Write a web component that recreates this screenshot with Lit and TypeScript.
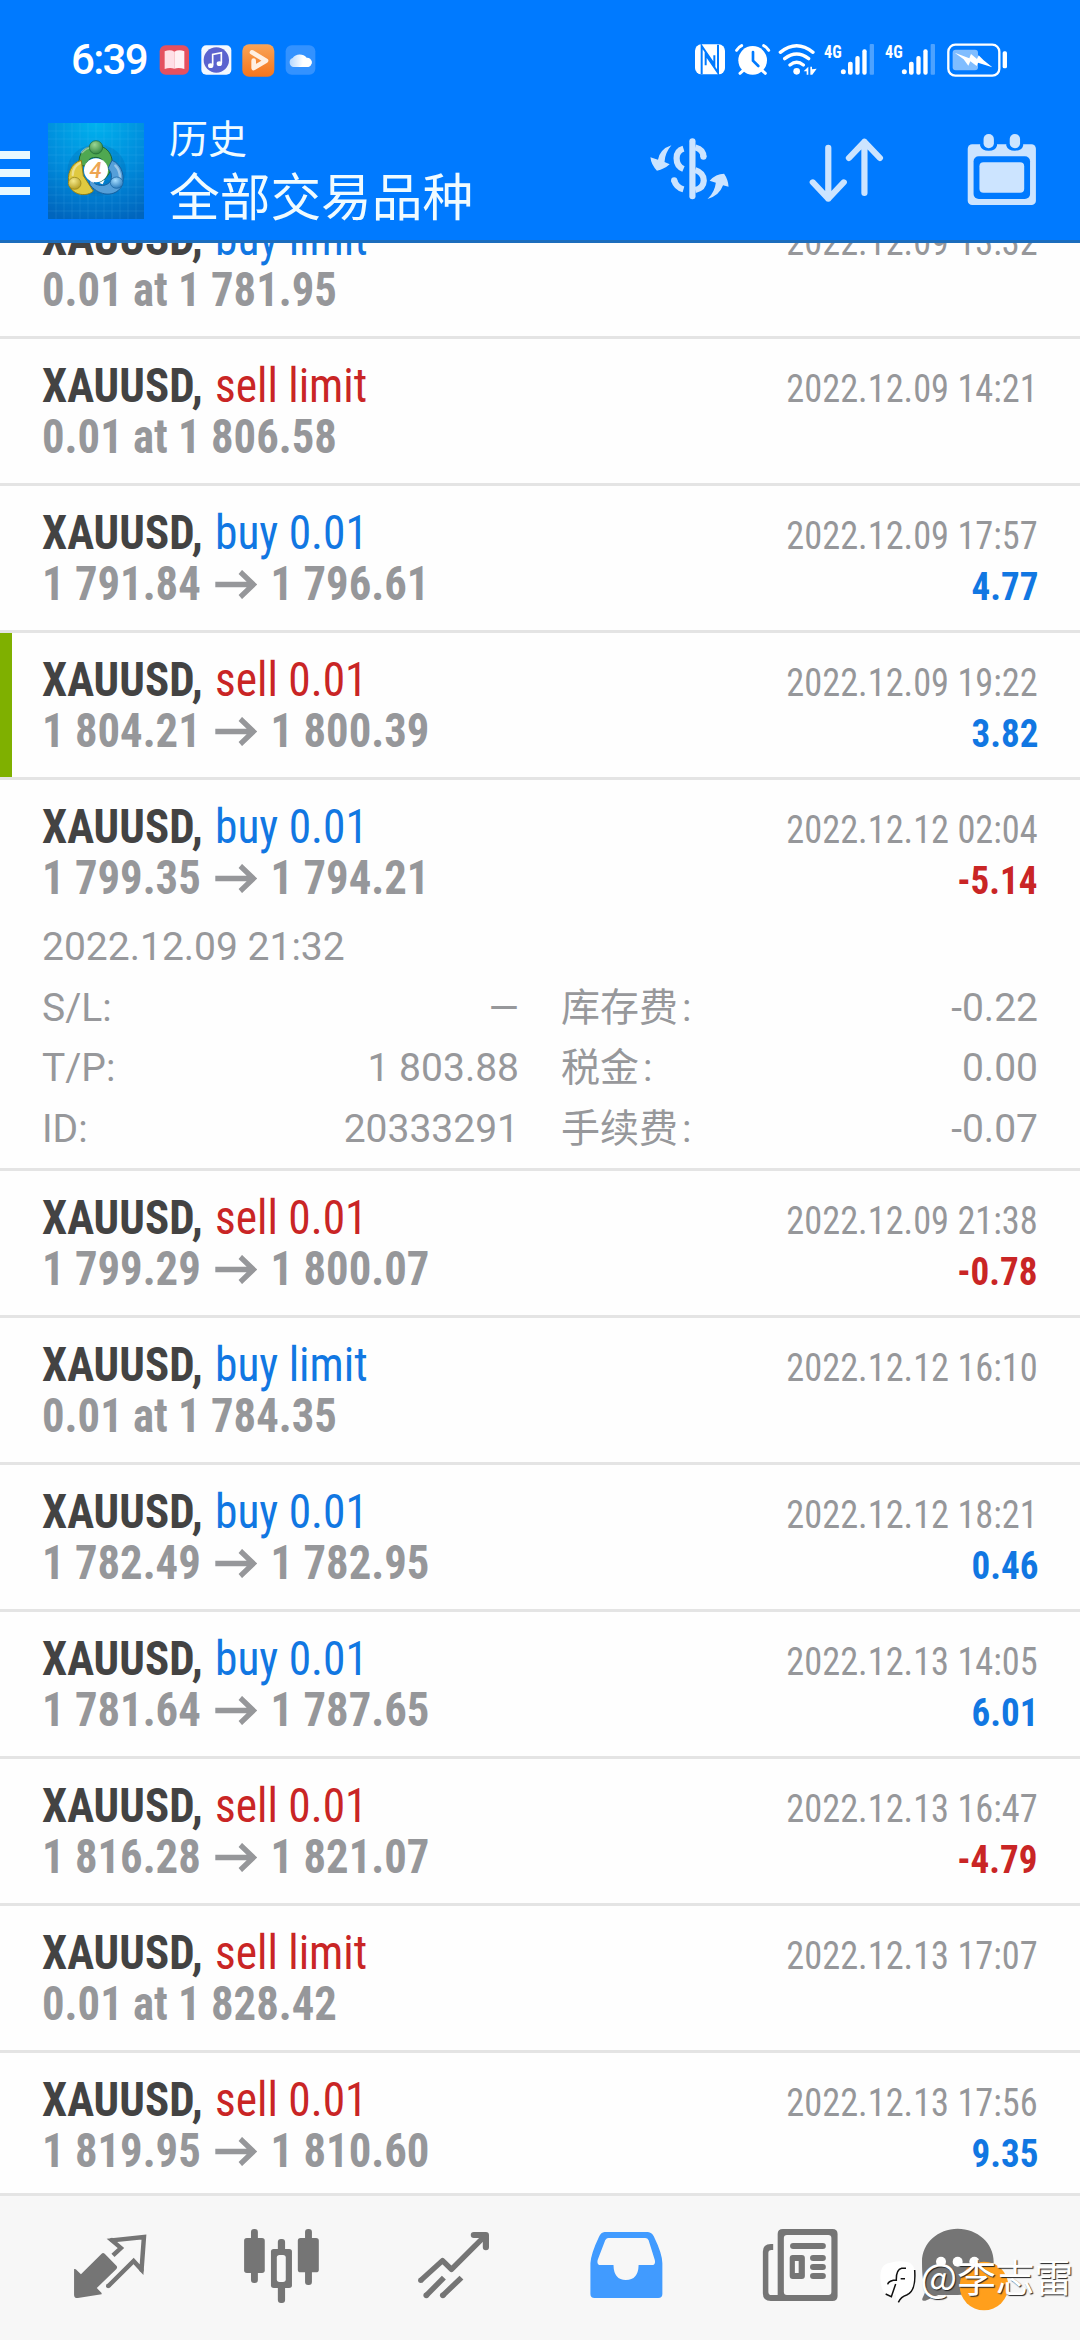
import { LitElement, html, css, svg, nothing } from "lit";
import { customElement, property } from "lit/decorators.js";

interface Deal {
  side: "buy" | "sell";
  kind: string;
  from?: string;
  to: string;
  time: string;
  profit?: string;
  marked?: boolean;
  open?: boolean;
}

const DEALS: Deal[] = [
  { side: "buy", kind: "limit", to: "0.01 at 1 781.95", time: "2022.12.09 13:32" },
  { side: "sell", kind: "limit", to: "0.01 at 1 806.58", time: "2022.12.09 14:21" },
  { side: "buy", kind: "0.01", from: "1 791.84", to: "1 796.61", time: "2022.12.09 17:57", profit: "4.77" },
  { side: "sell", kind: "0.01", from: "1 804.21", to: "1 800.39", time: "2022.12.09 19:22", profit: "3.82", marked: true },
  { side: "buy", kind: "0.01", from: "1 799.35", to: "1 794.21", time: "2022.12.12 02:04", profit: "-5.14", open: true },
  { side: "sell", kind: "0.01", from: "1 799.29", to: "1 800.07", time: "2022.12.09 21:38", profit: "-0.78" },
  { side: "buy", kind: "limit", to: "0.01 at 1 784.35", time: "2022.12.12 16:10" },
  { side: "buy", kind: "0.01", from: "1 782.49", to: "1 782.95", time: "2022.12.12 18:21", profit: "0.46" },
  { side: "buy", kind: "0.01", from: "1 781.64", to: "1 787.65", time: "2022.12.13 14:05", profit: "6.01" },
  { side: "sell", kind: "0.01", from: "1 816.28", to: "1 821.07", time: "2022.12.13 16:47", profit: "-4.79" },
  { side: "sell", kind: "limit", to: "0.01 at 1 828.42", time: "2022.12.13 17:07" },
  { side: "sell", kind: "0.01", from: "1 819.95", to: "1 810.60", time: "2022.12.13 17:56", profit: "9.35" },
];

const SX = 2.904;

// Icons are drawn on a grid about three times finer than the screen.
const icon = (x: number, y: number, w: number, h: number, body: unknown, sx = 3) => html`<svg
  width=${w / sx} height=${h / 3} viewBox="${x} ${y} ${w} ${h}" preserveAspectRatio="none">${body}</svg>`;

const signal = (dx: number) => svg`<g transform="translate(${dx} 0)">
  <text x="433" y="67" font-size="56" font-weight="700" font-family="Roboto Condensed" textLength="53" lengthAdjust="spacingAndGlyphs" fill="#fff">4G</text>
  <circle cx="491" cy="109" r="7.5"/><rect x="505" y="79" width="14" height="39" rx="6"/>
  <rect x="527" y="62" width="13" height="56" rx="6"/><rect x="548" y="42" width="13" height="76" rx="6"/>
  <rect x="570" y="26" width="13" height="92" rx="3" opacity=".3"/></g>`;

const STATUS_RIGHT = svg`<g fill="#fff">
  <rect x="46" y="27" width="90" height="90" rx="19"/>
  <path d="M66 117V32L104 88V60M115 28V112L78 58V90" fill="none" stroke="#007aff" stroke-width="6"/>
  <circle cx="219" cy="75" r="43"/>
  <path d="M171 45Q177 35 186 31M252 31Q261 35 267 45M190 106L181 114M248 106L257 114" fill="none" stroke="#fff" stroke-width="9" stroke-linecap="round"/>
  <path d="M220 50V76L236 92" fill="none" stroke="#007aff" stroke-width="8" stroke-linecap="round"/>
  <path d="M302 51Q351 12 400 51M315 70Q351 42 387 70M331 89Q351 73 371 89" fill="none" stroke="#fff" stroke-width="10" stroke-linecap="round"/>
  <circle cx="351" cy="108" r="10"/>
  <path d="M372 108L386 94V118H381V108ZM392 94H397V102L411 100L398 118H392Z"/>
  ${signal(0)}${signal(183)}
  <rect x="806" y="28" width="153" height="93" rx="21" fill="none" stroke="#fff" stroke-width="7"/>
  <rect x="819" y="43" width="76" height="62" rx="9" opacity=".5"/>
  <path d="M825 52L869 69L874 56L892 71L897 60L912 75L938 96L895 82L891 92L872 78L866 91L852 72Z"/>
  <rect x="969" y="48" width="13" height="51" rx="5"/></g>`;

const STATUS_APPS = svg`<defs>
  <linearGradient id="or" x1="0" y1="0" x2="0" y2="1"><stop offset="0" stop-color="#f9a457"/><stop offset="1" stop-color="#f5751c"/></linearGradient>
  <linearGradient id="cl" x1="0" y1="0" x2="1" y2="0"><stop offset="0" stop-color="#b5d8ff"/><stop offset=".6" stop-color="#fff"/></linearGradient></defs>
  <rect x="298" y="30" width="88" height="88" rx="18" fill="#e4505f"/>
  <path d="M313 48Q330 41 342 49V100Q328 96 313 101Z" fill="#ffdfe6"/><path d="M342 49Q356 41 372 48V101Q356 96 342 100Z" fill="#fff0f3"/>
  <rect x="423" y="30" width="90" height="88" rx="15" fill="#f4f8ff"/>
  <circle cx="468" cy="74" r="38" fill="#5b63cf"/>
  <path d="M457 90V57L483 52V84" fill="none" stroke="#fff" stroke-width="5"/><ellipse cx="451" cy="91" rx="8" ry="7" fill="#fff"/><ellipse cx="477" cy="85" rx="8" ry="7" fill="#fff"/>
  <rect x="546" y="27" width="96" height="97" rx="20" fill="url(#or)"/>
  <path d="M575 51L617 76L580 98V76" fill="none" stroke="#fff0e2" stroke-width="14" stroke-linejoin="round" stroke-linecap="round"/>
  <rect x="676" y="30" width="89" height="88" rx="18" fill="#3392ff"/>
  <path d="M700 95A14 14 0 0 1 697 68A25 22 0 0 1 739 67A14 14 0 0 1 742 95Z" fill="url(#cl)"/>
  <path d="M714 95Q726 92 732 76Q739 67 747 71A13 13 0 0 1 742 95Z" fill="#fff"/>`;

const LOGO = svg`<defs>
  <radialGradient id="bg" cx=".5" cy="0" r="1.05"><stop offset="0" stop-color="#00b2ee"/><stop offset=".55" stop-color="#008bdb"/><stop offset="1" stop-color="#0065bd"/></radialGradient>
  <radialGradient id="g" cx=".4" cy=".3" r=".8"><stop offset="0" stop-color="#9bd694"/><stop offset="1" stop-color="#257d35"/></radialGradient>
  <radialGradient id="y" cx=".4" cy=".3" r=".8"><stop offset="0" stop-color="#f5e98a"/><stop offset="1" stop-color="#ae9414"/></radialGradient>
  <radialGradient id="b" cx=".4" cy=".3" r=".8"><stop offset="0" stop-color="#a5ddff"/><stop offset="1" stop-color="#1c6fb4"/></radialGradient></defs>
  <rect x="24" y="24" width="288" height="288" fill="url(#bg)"/>
  <path d="M48 24V312M72 24V312M96 24V312M120 24V312M144 24V312M168 24V312M192 24V312M216 24V312M240 24V312M264 24V312M288 24V312M24 48H312M24 72H312M24 96H312M24 120H312M24 144H312M24 168H312M24 192H312M24 216H312M24 240H312M24 264H312M24 288H312" stroke="#6cc8f5" stroke-opacity=".2" stroke-width="2" fill="none"/>
  <ellipse cx="170" cy="166" rx="88" ry="78" fill="#004e8e" opacity=".18"/>
  <path d="M118 150C112 115 135 92 168 92C204 92 224 126 214 160C207 182 190 198 180 200C198 176 205 130 168 127C146 127 140 142 137 154Z" fill="#4fa851" stroke="#1c6434" stroke-width="3"/>
  <path d="M124 136C94 142 78 180 88 212C100 242 142 246 160 228L130 182Z" fill="#dfc940" stroke="#8e7d16" stroke-width="3"/>
  <path d="M216 136C248 148 256 190 244 216C224 246 180 244 152 212C146 204 148 198 152 196C176 222 214 212 214 188C216 172 208 166 204 160Z" fill="#559fd9" stroke="#17609e" stroke-width="3"/>
  <path d="M126 112C138 98 152 96 164 100M98 180C98 164 108 150 120 144M226 152Q240 166 240 188" stroke="#fff" stroke-opacity=".4" stroke-width="7" fill="none" stroke-linecap="round"/>
  <circle cx="168" cy="166" r="36" fill="#fff"/>
  <path d="M148 196L158 199L164 206ZM178 204L194 194L188 208Z" fill="#fff"/>
  <ellipse cx="168" cy="97" rx="20" ry="20" fill="url(#g)" stroke="#1c6434" stroke-width="2"/>
  <ellipse cx="104" cy="205" rx="19" ry="18" fill="url(#y)" stroke="#8e7d16" stroke-width="2"/>
  <ellipse cx="230" cy="203" rx="19" ry="17" fill="url(#b)" stroke="#17609e" stroke-width="2"/>
  <text x="167" y="189" text-anchor="middle" font-size="66" font-family="Roboto" font-style="italic" font-weight="500" fill="#eda552">4</text>`;

const DOLLAR = svg`<g fill="none" stroke="#cce4ff" stroke-width="18">
  <path d="M444 425V590" stroke-linecap="round"/>
  <path d="M418 447Q398 453 398 476Q398 500 418 508"/>
  <path d="M452 443Q476 449 476 472" /><circle cx="476" cy="471" r="9" fill="#cce4ff" stroke="none"/>
  <path d="M452 511Q477 519 477 543Q476 566 452 571"/>
  <path d="M391 542Q397 563 418 569"/><circle cx="391" cy="542" r="9" fill="#cce4ff" stroke="none"/></g>
  <path d="M383 437Q350 448 344 480L322 473Q324 495 341 513Q362 509 378 494L363 487Q364 460 383 437ZM488 598Q522 588 533 557L549 561Q548 540 536 522Q512 522 494 543L512 549Q509 577 488 598Z" fill="#cce4ff"/>`;

const SORT = svg`<path d="M836 444V597M791 548L836 597L881 548M941 580V426M896 475L941 426L986 475" fill="none" stroke="#cce4ff" stroke-width="18" stroke-linecap="round" stroke-linejoin="round"/>`;

const CALENDAR = svg`<rect x="1243" y="434" width="198" height="182" rx="13" fill="#cce4ff"/>
  <rect x="1260" y="470" width="164" height="128" rx="15" fill="#007aff"/>
  <rect x="1277" y="488" width="130" height="91" rx="12" fill="#cce4ff"/>
  <path d="M1279 430H1328V438Q1324 453 1304 453Q1284 453 1279 438ZM1355 430H1404V438Q1400 453 1380 453Q1360 453 1355 438Z" fill="#007aff"/>
  <rect x="1289" y="403" width="30" height="43" rx="15" fill="#cce4ff"/><rect x="1365" y="403" width="30" height="43" rx="15" fill="#cce4ff"/>`;

const QUOTES = svg`<path d="M215 267L220 268L235 283L295 221Q299 217 304 221L338 257Q342 262 338 267L281 324L295 339V343L226 354Q215 355 215 344Z"/>
  <path d="M328 226L351 204L325 181L418 171L411 269L388 243L314 319" fill="none" stroke="#757575" stroke-width="13"/><circle cx="325" cy="180" r="6.5"/><circle cx="411" cy="270" r="6.5"/><circle cx="314" cy="318" r="6.5"/>`;
const CHART = svg`<rect x="729" y="147" width="20" height="162" rx="9"/><rect x="709" y="174" width="60" height="105" rx="8"/>
  <rect x="807" y="177" width="21" height="192" rx="9"/><rect x="787" y="207" width="61" height="117" rx="8"/>
  <rect x="804" y="225" width="26" height="81" rx="8" fill="#f7f7f7"/>
  <rect x="886" y="147" width="20" height="168" rx="9"/><rect x="865" y="174" width="61" height="103" rx="8"/>`;
const TREND = svg`<g fill="none" stroke="#757575" stroke-width="16" stroke-linejoin="round"><path d="M1221 302L1285 242L1311 268L1404 172M1238 346L1289 293M1286 346L1340 293"/>
  <path d="M1376 165H1411V202" stroke-width="18" stroke-linecap="round"/></g><circle cx="1222" cy="301" r="8"/><circle cx="1238" cy="346" r="8.5"/><circle cx="1286" cy="346" r="8.5"/>`;
const INBOX = svg`<path fill="#419bff" fill-rule="evenodd" d="M188 156H314Q325 157 331 169Q356 222 356 250V342Q356 354 344 354H159Q147 354 147 342V250Q148 222 172 170Q178 157 188 156ZM198 174Q193 175 190 181L168 240Q165 255 176 255H214Q215 300 250 300Q286 300 287 255H326Q337 255 334 240L316 181Q313 174 306 174Z"/>`;
const NEWS = svg`<path fill-rule="evenodd" d="M705 147H849Q864 147 864 162V348Q864 363 849 363H670Q647 363 647 340V215Q647 192 670 192H677V210H672Q663 210 663 219V335Q663 345 672 345H690V162Q690 147 705 147ZM717 165Q708 165 708 174V336Q708 345 717 345H837Q846 345 846 336V174Q846 165 837 165Z"/>
  <rect x="726" y="189" width="104" height="18" rx="9"/><path fill-rule="evenodd" d="M734 225H760Q769 225 769 234V288Q769 297 760 297H734Q725 297 725 288V234Q725 225 734 225ZM740 243V279H751V243Z"/>
  <rect x="784" y="225" width="46" height="18" rx="9"/><rect x="784" y="252" width="46" height="18" rx="9"/><rect x="784" y="279" width="46" height="18" rx="9"/>`;
const CHAT = svg`<path d="M293 41C352 41 401 84 401 140C401 196 352 240 293 240H235L196 257Q183 260 188 248L200 222C190 206 186 190 186 140C186 84 234 41 293 41Z"/>
  <g fill="#fff"><circle cx="243" cy="140" r="15"/><circle cx="293" cy="140" r="15"/><circle cx="343" cy="140" r="15"/></g><circle cx="372" cy="213" r="73" fill="#ff9f1c"/>`;
const MARK = svg`<path d="M90 142Q60 145 60 185Q60 232 84 239L92 237V246L108 234Q104 250 113 262Q120 245 140 240Q166 233 166 188Q166 145 140 140Q112 134 90 142Z" fill="#fff"/>
  <path d="M163 164Q168 228 139 239Q122 244 114 261M82 207Q84 199 99 195H108Q107 163 124 159H137M121 190H134M106 206L93 244L76 236" fill="none" stroke="#111" stroke-width="4.5"/>`;

const ARROW = html`<svg class="arrow" width="45" height="29" viewBox="0 0 45 29" preserveAspectRatio="none"><path d="M0 14.5H41M27 2L41 14.5L27 27" fill="none" stroke="currentColor" stroke-width="5.6"/></svg>`;

@customElement("deal-row")
class DealRow extends LitElement {
  @property({ attribute: false }) deal!: Deal;
  static styles = css`
    :host { display: block; flex: none; background: #fefefe; border-bottom: 3px solid #e4e4e4; }
    .row { box-sizing: border-box; height: 144px; padding: 21px 42px 0; color: #96979a; font-family: "Roboto Condensed", Roboto, sans-serif; }
    .marked { border-left: 12px solid #7fb000; padding-left: 30px; }
    .open { height: 388px; }
    .line { display: flex; justify-content: space-between; align-items: baseline; height: 51px; line-height: 51px; font-size: 48px; white-space: pre; }
    .left { display: flex; align-items: baseline; }
    .sym { width: 172.8px; font-weight: 700; color: #434343; transform: scaleX(.936); transform-origin: 0 50%; }
    .act { transform: scaleX(.946); transform-origin: 0 50%; }
    .price { font-weight: 700; transform: scaleX(.931); transform-origin: 0 50%; }
    .arrow { margin: 0 15px 1px 15px; vertical-align: baseline; }
    .time { font-size: 39px; transform: scaleX(.932); transform-origin: 100% 50%; }
    .profit { font-size: 39px; font-weight: 700; transform: scaleX(.95); transform-origin: 100% 50%; }
    .buy, .profit { color: #1177e2; }
    .sell, .loss { color: #c92525; }
    .details { margin-top: 14px; font: 400 39px/60.7px Roboto, "Noto Sans CJK SC", sans-serif; display: grid; grid-template-columns: 1fr 1fr; column-gap: 42px; color: #97989b; }
    .opened { grid-column: 1 / 3; }
    .pair { display: flex; justify-content: space-between; height: 60.7px; }
    .cjk i { font-style: normal; margin-left: 4px; }
  `;
  private pair(label: string, value: string) {
    return html`<div class="pair"><span>${label}:</span><span>${value}</span></div>`;
  }
  private fee(label: string, value: string) {
    return html`<div class="pair"><span class="cjk">${label}<i>:</i></span><span>${value}</span></div>`;
  }
  render() {
    const d = this.deal;
    return html`<div class="row ${d.marked ? "marked" : ""} ${d.open ? "open" : ""}">
      <div class="line"><div class="left"><span class="sym">XAUUSD,</span><span class="act ${d.side}">${d.side} ${d.kind}</span></div><span class="time">${d.time}</span></div>
      <div class="line"><span class="price">${d.from ? html`${d.from}${ARROW}` : nothing}${d.to}</span>
        ${d.profit ? html`<span class="profit ${d.profit.startsWith("-") ? "loss" : ""}">${d.profit}</span>` : nothing}</div>
      ${d.open ? html`<div class="details"><div class="opened">2022.12.09 21:32</div>
        ${this.pair("S/L", "—")}${this.fee("库存费", "-0.22")}
        ${this.pair("T/P", "1 803.88")}${this.fee("税金", "0.00")}
        ${this.pair("ID", "20333291")}${this.fee("手续费", "-0.07")}</div>` : nothing}
    </div>`;
  }
}

@customElement("app-root")
class AppRoot extends LitElement {
  static styles = css`
    :host { display: flex; flex-direction: column; position: relative; width: 1080px; height: 2340px; overflow: hidden; background: #fefefe; font-family: Roboto, "Noto Sans CJK SC", sans-serif; }
    svg { display: block; flex: none; }
    .top { flex: none; height: 240px; background: #007aff; border-bottom: 3px solid #1b6dbd; color: #f0fbff; }
    .status { display: flex; align-items: center; box-sizing: border-box; height: 102px; padding: 18px 70px 0 71px; }
    .clock { width: 85.6px; font: 500 42px/50px Roboto, sans-serif; letter-spacing: -1.7px; color: #fff; }
    .apps { flex: 1; }
    .bar { display: flex; align-items: center; height: 138px; padding-right: 42px; }
    .menu { display: flex; flex-direction: column; gap: 10px; width: 30px; margin: 4px 18px 0 0; }
    .menu i { height: 8px; background: #e8f8ff; }
    .titles { flex: 1; margin-left: 25px; white-space: nowrap; }
    .title { font-size: 39px; line-height: 56px; }
    .sub { font-size: 50.7px; line-height: 62px; }
    .actions { display: flex; }
    .actions svg + svg { margin-left: 78px; }
    .actions svg:last-child { margin-left: 82px; }
    .list { flex: 1; min-height: 0; display: flex; flex-direction: column; overflow: hidden; }
    .list deal-row:first-child { margin-top: -51px; }
    .nav { flex: none; display: flex; height: 144px; padding-left: 24px; border-top: 3px solid #e4e4e4; background: #f7f7f7; fill: #757575; }
    .tab { width: 172px; display: flex; justify-content: center; align-items: center; }
    .mark { position: absolute; right: 7px; bottom: 36px; display: flex; align-items: center; }
    .name { color: #fff; font: 400 39px/48px "Noto Sans CJK SC", sans-serif; text-shadow: 1px 1px 1px #222; margin: -14px 0 0 2px; letter-spacing: -.3px; }
  `;
  render() {
    return html`
      <header class="top">
        <div class="status"><div class="clock">6:39</div><div class="apps">${icon(290, 20, 480, 110, STATUS_APPS)}</div>${icon(40, 20, 950, 110, STATUS_RIGHT)}</div>
        <div class="bar">
          <div class="menu"><i></i><i></i><i></i></div>
          ${icon(24, 24, 288, 288, LOGO)}
          <div class="titles"><div class="title">历史</div><div class="sub">全部交易品种</div></div>
          <div class="actions">${icon(315, 400, 240, 226, DOLLAR, SX)}${icon(780, 400, 220, 226, SORT, SX)}${icon(1238, 400, 208, 226, CALENDAR, SX)}</div>
        </div>
      </header>
      <main class="list">${DEALS.map((d) => html`<deal-row .deal=${d}></deal-row>`)}</main>
      <nav class="nav">
        <div class="tab">${icon(209, 144, 221, 240, QUOTES, SX)}</div>
        <div class="tab">${icon(700, 144, 238, 240, CHART, SX)}</div>
        <div class="tab">${icon(1208, 144, 220, 240, TREND, SX)}</div>
        <div class="tab">${icon(140, 144, 220, 240, INBOX, SX)}</div>
        <div class="tab">${icon(630, 144, 238, 240, NEWS, SX)}</div>
        <div class="tab">${icon(186, 27, 288, 264, CHAT)}</div>
      </nav>
      <div class="mark">${icon(56, 134, 118, 132, MARK)}<span class="name">@李志雷</span></div>
    `;
  }
}
